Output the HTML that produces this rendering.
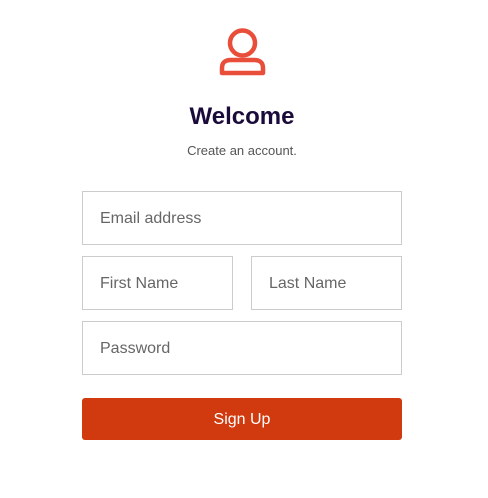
<!DOCTYPE html>
<html><head><style>
body{margin:0;width:488px;height:498px;background:#fff;font-family:"Liberation Sans",sans-serif;position:relative;overflow:hidden}
.a{position:absolute}
.in{position:absolute;box-sizing:border-box;border:1px solid #ccc;background:#fff;font-size:16px;color:#666;padding-left:17px;padding-top:2px;display:flex;align-items:center}
</style></head><body>
<svg class="a" style="left:214px;top:22px" width="60" height="60" viewBox="0 0 60 60">
<circle cx="28.5" cy="21" r="12.5" fill="none" stroke="#e84e3a" stroke-width="4.5"/>
<path d="M8 51 V46 Q8 38 17 38 H40 Q49 38 49 46 V51 Z" fill="none" stroke="#e84e3a" stroke-width="4.5" stroke-linejoin="round"/>
</svg>
<div class="a" style="left:0;width:484px;top:103px;text-align:center;font-size:24px;font-weight:bold;color:#1b0b3b">Welcome</div>
<div class="a" style="left:0;width:484px;top:143px;text-align:center;font-size:13px;color:#555">Create an account.</div>
<div class="in" style="left:82px;top:191px;width:320px;height:54px">Email address</div>
<div class="in" style="left:82px;top:256px;width:151px;height:54px">First Name</div>
<div class="in" style="left:251px;top:256px;width:151px;height:54px">Last Name</div>
<div class="in" style="left:82px;top:321px;width:320px;height:54px">Password</div>
<div class="a" style="left:82px;top:398px;width:320px;height:42px;background:#d03a0e;border-radius:3px;color:#fff;font-size:16px;display:flex;align-items:center;justify-content:center;padding-top:2px;box-sizing:border-box">Sign Up</div>
</body></html>
